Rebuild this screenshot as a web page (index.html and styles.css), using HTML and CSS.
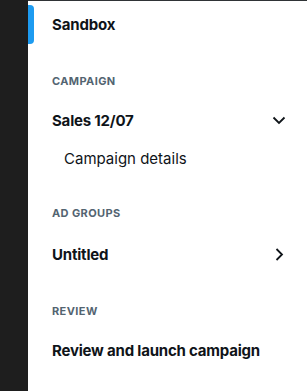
FILE: index.html
```html
<!DOCTYPE html>
<html lang="en">

<head>
    <meta charset="UTF-8">
    <meta name="viewport" content="width=device-width, initial-scale=1.0">
    <title>Campaign</title>
    <link rel="stylesheet" href="styles.css">
</head>

<body>
    <div class="layout">
        <div class="rail"></div>
        <nav class="nav">
            <div class="top-item active">Sandbox</div>

            <div class="section">
                <div class="section-label">Campaign</div>
                <div class="item">
                    <span>Sales 12/07</span>
                    <svg class="chevron" width="20" height="20" viewBox="0 0 20 20">
                        <path d="M5.5 7.5 L11 13 L16.5 7.5" fill="none" stroke="#0f1419" stroke-width="1.8"/>
                    </svg>
                </div>
                <div class="item sub">Campaign details</div>
            </div>

            <div class="section">
                <div class="section-label">Ad groups</div>
                <div class="item group">
                    <span>Untitled</span>
                    <svg class="chevron" width="20" height="20" viewBox="0 0 20 20">
                        <path d="M8.5 5 L14 10.5 L8.5 16" fill="none" stroke="#0f1419" stroke-width="1.8"/>
                    </svg>
                </div>
            </div>

            <div class="section">
                <div class="section-label">Review</div>
                <div class="item">Review and launch campaign</div>
            </div>
        </nav>
    </div>
</body>

</html>
```

FILE: styles.css
```css
body {
    margin: 0;
    font-family: Inter, "Noto Sans", sans-serif;
    color: #0f1419;
    background: #fff;
}

.layout {
    display: flex;
    height: 391px;
}

.rail {
    width: 28px;
    background-color: #1e1e1e;
}

.nav {
    flex: 1;
    border-top: 1px solid #2f3336;
    padding-top: 2px;
}

.top-item {
    position: relative;
    height: 42px;
    display: flex;
    align-items: center;
    padding-left: 24px;
    font-size: 15px;
    font-weight: 700;
    letter-spacing: -0.15px;
}

.top-item.active::before {
    content: "";
    position: absolute;
    left: 0;
    top: 2px;
    bottom: 1px;
    width: 6px;
    background: #1d9bf0;
    border-radius: 0 4px 4px 0;
}

.section {
    padding-top: 28px;
}

.section-label {
    height: 16px;
    line-height: 16px;
    padding-left: 24px;
    margin-bottom: 12px;
    font-size: 11px;
    font-weight: 700;
    letter-spacing: 0.4px;
    text-transform: uppercase;
    color: #536471;
}

.item {
    height: 38px;
    display: flex;
    align-items: center;
    justify-content: space-between;
    padding: 0 19px 0 24px;
    font-size: 15px;
    font-weight: 700;
    letter-spacing: -0.2px;
}

.item.group {
    height: 42px;
}

.item.sub {
    padding-left: 36px;
    font-weight: 400;
    letter-spacing: 0;
}

.chevron {
    flex-shrink: 0;
}
```
